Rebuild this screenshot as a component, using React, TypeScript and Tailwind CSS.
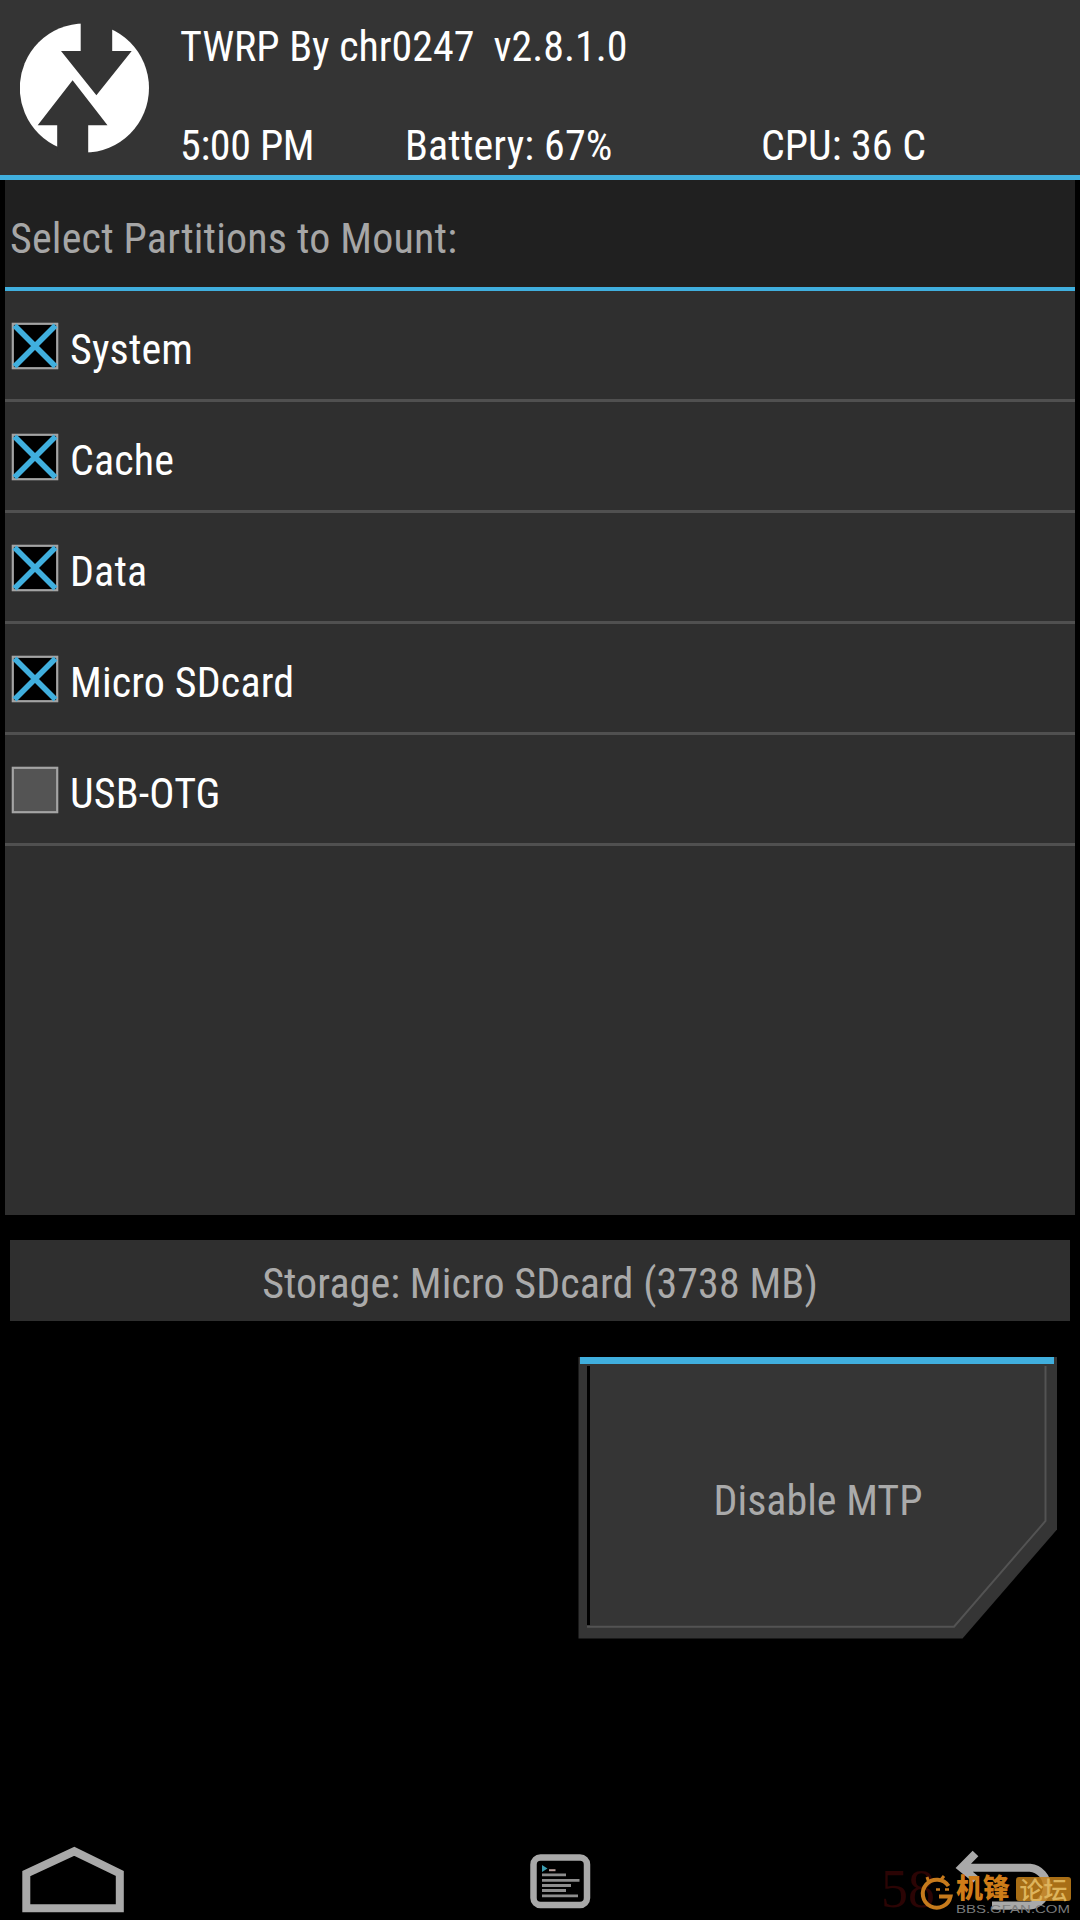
import { useState } from "react";

interface Partition {
  name: string;
  mounted: boolean;
}

const initialPartitions: Partition[] = [
  { name: "System", mounted: true },
  { name: "Cache", mounted: true },
  { name: "Data", mounted: true },
  { name: "Micro SDcard", mounted: true },
  { name: "USB-OTG", mounted: false },
];

function Logo() {
  return (
    <svg width="130" height="130" viewBox="20 23 130 130" className="mt-[23px] ml-5 shrink-0">
      <circle cx="84.4" cy="88" r="64.6" fill="#fff" />
      <path d="M80.7 20H112.2V51H131.7L96.4 95.3L61 51H80.7Z" fill="#343434" />
      <path d="M72.6 80.3L107.5 125.3H88.2V156H57.2V125.3H37.7Z" fill="#343434" />
    </svg>
  );
}

function Header() {
  return (
    <header className="flex h-[180px] border-b-[5px] border-[#40afde] bg-[#343434] text-white">
      <Logo />
      <div className="ml-[30px] flex flex-1 flex-col justify-between pt-[23px] pb-[5px]">
        <div className="tracking-[-0.03px] whitespace-pre">{"TWRP By chr0247  v2.8.1.0"}</div>
        <div className="flex">
          <span className="w-[225px] tracking-[-0.35px]">5:00 PM</span>
          <span className="w-[356px] tracking-[0.15px]">Battery: 67%</span>
          <span>CPU: 36 C</span>
        </div>
      </div>
    </header>
  );
}

function Checkbox({ checked }: { checked: boolean }) {
  return (
    <svg width="48" height="48" viewBox="0 0 48 48" className="shrink-0">
      <rect
        x="1.8"
        y="1.8"
        width="44.4"
        height="44.4"
        fill={checked ? "#000" : "#545454"}
        stroke="#a4a4a4"
        strokeWidth="2.2"
      />
      {checked && <path d="M3.5 3.5L44.5 44.5M44.5 3.5L3.5 44.5" stroke="#40afde" strokeWidth="5.6" />}
    </svg>
  );
}

function MtpButton() {
  return (
    <button className="relative mt-[29px] ml-[570px] flex h-[300px] w-[500px] items-center justify-center text-[#aaa]">
      <svg viewBox="570 1350 500 300" className="absolute inset-0 h-full w-full">
        <path d="M578.5 1357H1057V1529.5L962.5 1638.5H578.5Z" fill="#353535" />
        <path d="M588.5 1366V1625" stroke="#000" strokeWidth="3" />
        <path d="M587 1626.7H954L1045.5 1521V1366" fill="none" stroke="#535353" strokeWidth="2" />
        <rect x="580" y="1357" width="474" height="7" fill="#40afde" />
      </svg>
      <span className="relative mt-[2px] ml-[-4px]">Disable MTP</span>
    </button>
  );
}

function NavBar() {
  return (
    <nav className="mt-auto flex h-[80px] justify-between">
      {/* Home */}
      <svg width="200" height="80" viewBox="0 1840 200 80">
        <path d="M26.3 1908.2V1873.5L74.3 1851.3L119.8 1873.5V1908.2Z" fill="none" stroke="#a9a9a9" strokeWidth="8" />
      </svg>

      {/* Console */}
      <svg width="120" height="80" viewBox="480 1840 120 80">
        <rect x="533.5" y="1857.5" width="53.5" height="47.5" rx="7" fill="#000" stroke="#a9a9a9" strokeWidth="6.5" />
        <path d="M542 1865L547.5 1868.5L542 1872Z" fill="#3d9db0" />
        <path d="M549 1870.2H555.5" stroke="#b9a09c" strokeWidth="2" />
        <path
          d="M542 1874.8H566M542 1880.3H579.5M542 1885.5H571M542 1890.5H566M542 1895.8H578"
          stroke="#8d8d8d"
          strokeWidth="2.8"
        />
      </svg>

      {/* Back */}
      <svg width="200" height="80" viewBox="880 1840 200 80">
        <path
          d="M975.5 1853.5L961.5 1867.7L976 1879.5M962 1867.7H1030A19 19 0 0 1 1030 1905.5H992"
          fill="none"
          stroke="#a9a9a9"
          strokeWidth="8"
        />
      </svg>
    </nav>
  );
}

function Watermark() {
  return (
    <div className="pointer-events-none absolute right-2 bottom-[4px] h-[56px] w-[191px]">
      <span className="absolute top-[2px] left-0 font-['Liberation_Serif',serif] text-[54px] leading-[54px] text-[#2b0404]">
        58
      </span>
      <svg width="36" height="40" viewBox="919 1874 36 40" className="absolute top-[14px] left-[38px]">
        <path
          d="M948.5 1886A14 14 0 1 0 950.5 1896.5H939"
          fill="none"
          stroke="#c67a1c"
          strokeWidth="4"
        />
        <path d="M929 1883L927 1877M940 1881L944 1876" stroke="#c67a1c" strokeWidth="3" />
        <path d="M936 1889.5H940M945 1889.5H949" stroke="#c67a1c" strokeWidth="2.5" />
      </svg>
      <div className="absolute top-[15px] left-[75px] flex items-start gap-[3px] font-['Noto_Sans_CJK_SC',sans-serif] font-black">
        <span className="w-[57px] text-[27px] leading-[24px] text-[#cf7c18]">机锋</span>
        <span className="mt-[2px] h-[24px] w-[55px] rounded-[3px] bg-[#c5811a]/85 text-center text-[24px] leading-[23px] font-medium text-[#deb45c]">
          论坛
        </span>
      </div>
      <svg width="116" height="12" viewBox="0 0 116 12" className="absolute top-[43px] left-[75px]">
        <text
          x="0"
          y="9.5"
          textLength="114"
          lengthAdjust="spacingAndGlyphs"
          fontFamily="Liberation Sans, sans-serif"
          fontSize="11"
          fill="#7c7c7c"
        >
          BBS.GFAN.COM
        </text>
      </svg>
    </div>
  );
}

export default function App() {
  const [partitions, setPartitions] = useState(initialPartitions);

  function toggle(name: string): void {
    setPartitions(partitions.map((p) => (p.name === name ? { ...p, mounted: !p.mounted } : p)));
  }

  return (
    <div className="relative flex h-[1920px] w-[1080px] flex-col overflow-hidden bg-black font-['Roboto_Condensed',Roboto,sans-serif] text-[42px] leading-[48px]">
      <Header />

      <main className="mx-[5px] h-[1035px] bg-[#2f2f2f]">
        <div className="h-[111px] border-b-4 border-[#40afde] bg-[#202020] pt-[35px] pl-[5px] tracking-[0.19px] text-[#a6a6a6]">
          Select Partitions to Mount:
        </div>
        {partitions.map((p) => (
          <div
            key={p.name}
            onClick={() => toggle(p.name)}
            className="flex h-[111px] border-b-[3px] border-[#505050] pt-[31px] pl-[6px] text-white"
          >
            <Checkbox checked={p.mounted} />
            <span className="mt-[4px] ml-[11px] tracking-[0.15px]">{p.name}</span>
          </div>
        ))}
      </main>

      <div className="mx-[10px] mt-[25px] h-[81px] bg-[#2f2f2f] pt-[20px] text-center tracking-[0.1px] text-[#aaa]">
        Storage: Micro SDcard (3738 MB)
      </div>

      <MtpButton />
      <NavBar />
      <Watermark />
    </div>
  );
}
